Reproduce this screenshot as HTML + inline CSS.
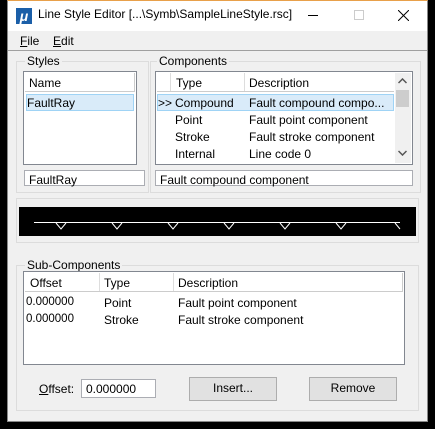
<!DOCTYPE html><html><head><style>
*{box-sizing:border-box}
body{margin:0;width:435px;height:429px;background:#000;position:relative;overflow:hidden;font-family:"Liberation Sans",sans-serif;font-size:12px;color:#000}
.a{position:absolute}
.win{left:7px;top:0;width:421px;height:422px;background:#f0f0f0;border:1px solid #888;border-top:1px solid #e8a04a}
.grp{border:1px solid #dcdcdc}
.lbl{background:#f0f0f0;padding:0 2px;font-size:12px}
.box{background:#fff;border:1px solid #828790}
.hdr{background:#fff;border-bottom:1px solid #e5e5e5}
.btn{background:#e1e1e1;border:1px solid #adadad;text-align:center;line-height:21px}
.inp{background:#fff;border:1px solid #7a7a7a;padding-left:4px;line-height:14px}
</style></head><body>
<div class="a win"></div>
<div class="a" style="left:8px;top:1px;width:419px;height:30px;background:#fff"></div>
<div class="a" style="left:16px;top:8px;width:16px;height:16px;background:#1b5fa8;color:#fff;font-style:italic;font-weight:bold;font-size:14px;line-height:16px;text-align:center">μ</div>
<div class="a" style="left:38px;top:7px;font-size:12px">Line Style Editor [...\Symb\SampleLineStyle.rsc]</div>
<div class="a" style="left:308px;top:15px;width:10px;height:1px;background:#000"></div>
<div class="a" style="left:354px;top:10px;width:10px;height:10px;border:1px solid #ccc"></div>
<svg class="a" style="left:398px;top:10px" width="11" height="11"><path d="M0 0L11 11M11 0L0 11" stroke="#000"/></svg>
<div class="a" style="left:20px;top:34px"><u>F</u>ile</div>
<div class="a" style="left:53px;top:34px"><u>E</u>dit</div>
<div class="a" style="left:8px;top:50px;width:419px;height:1px;background:#a0a0a0"></div>

<div class="a grp" style="left:16px;top:61px;width:133px;height:132px"></div>
<div class="a lbl" style="left:25px;top:54px">Styles</div>
<div class="a box" style="left:23px;top:71px;width:114px;height:94px"></div>
<div class="a hdr" style="left:25px;top:73px;width:110px;height:19px;border-right:1px solid #ccc;border-bottom:1px solid #ccc"></div>
<div class="a" style="left:29px;top:76px">Name</div>
<div class="a" style="left:26px;top:94px;width:108px;height:17px;background:#d9ebf9;border:1px solid #9fd3f5"></div>
<div class="a" style="left:27px;top:96px">FaultRay</div>
<div class="a inp" style="left:24px;top:170px;width:121px;height:16px;border-color:#abadb3"></div>
<div class="a" style="left:29px;top:173px">FaultRay</div>

<div class="a grp" style="left:150px;top:61px;width:271px;height:132px"></div>
<div class="a lbl" style="left:157px;top:54px">Components</div>
<div class="a box" style="left:155px;top:71px;width:258px;height:94px"></div>
<div class="a hdr" style="left:157px;top:73px;width:237px;height:19px;border-bottom:1px solid #ccc"></div>
<div class="a" style="left:170px;top:73px;width:1px;height:18px;background:#ddd"></div>
<div class="a" style="left:244px;top:73px;width:1px;height:18px;background:#ddd"></div>
<div class="a" style="left:176px;top:76px">Type</div>
<div class="a" style="left:249px;top:76px">Description</div>
<div class="a" style="left:395px;top:73px;width:16px;height:90px;background:#f0f0f0"></div>
<div class="a" style="left:396px;top:90px;width:13px;height:17px;background:#cdcdcd"></div>
<svg class="a" style="left:398px;top:78px" width="9" height="6"><path d="M0.5 5L4.5 1L8.5 5" stroke="#555" fill="none" stroke-width="1.5"/></svg>
<svg class="a" style="left:398px;top:150px" width="9" height="6"><path d="M0.5 1L4.5 5L8.5 1" stroke="#555" fill="none" stroke-width="1.5"/></svg>
<div class="a" style="left:157px;top:94px;width:237px;height:17px;background:#d9ebf9;border:1px solid #9fd3f5"></div>
<div class="a" style="left:158px;top:96px">&gt;&gt;</div>
<div class="a" style="left:175px;top:96px">Compound</div><div class="a" style="left:249px;top:96px">Fault compound compo...</div>
<div class="a" style="left:175px;top:113px">Point</div><div class="a" style="left:249px;top:113px">Fault point component</div>
<div class="a" style="left:175px;top:130px">Stroke</div><div class="a" style="left:249px;top:130px">Fault stroke component</div>
<div class="a" style="left:175px;top:147px">Internal</div><div class="a" style="left:249px;top:147px">Line code 0</div>
<div class="a inp" style="left:155px;top:170px;width:258px;height:16px;border-color:#abadb3"></div>
<div class="a" style="left:160px;top:173px">Fault compound component</div>

<div class="a grp" style="left:16px;top:198px;width:403px;height:45px"></div>
<div class="a" style="left:19px;top:207px;width:397px;height:29px;background:#000"></div>
<svg class="a" style="left:19px;top:207px" width="397" height="29"><path d="M15 15.5H381" stroke="#fff"/><g stroke="#fff" fill="none"><path d="M37 16l5 6l5-6M93 16l5 6l5-6M149 16l5 6l5-6M205 16l5 6l5-6M261 16l5 6l5-6M317 16l5 6l5-6M376 16l5 6"/></g></svg>

<div class="a grp" style="left:16px;top:265px;width:403px;height:146px"></div>
<div class="a lbl" style="left:25px;top:258px">Sub-Components</div>
<div class="a box" style="left:23px;top:271px;width:382px;height:94px"></div>
<div class="a hdr" style="left:25px;top:273px;width:378px;height:19px;border-bottom:1px solid #ccc;border-right:1px solid #ccc"></div>
<div class="a" style="left:99px;top:273px;width:1px;height:18px;background:#ddd"></div>
<div class="a" style="left:173px;top:273px;width:1px;height:18px;background:#ddd"></div>
<div class="a" style="left:30px;top:276px">Offset</div><div class="a" style="left:104px;top:276px">Type</div><div class="a" style="left:178px;top:276px">Description</div>
<div class="a" style="left:26px;top:296px;font-size:11.5px">0.000000</div><div class="a" style="left:104px;top:296px">Point</div><div class="a" style="left:178px;top:296px">Fault point component</div>
<div class="a" style="left:26px;top:313px;font-size:11.5px">0.000000</div><div class="a" style="left:104px;top:313px">Stroke</div><div class="a" style="left:178px;top:313px">Fault stroke component</div>
<div class="a" style="left:39px;top:382px"><u>O</u>ffset:</div>
<div class="a inp" style="left:81px;top:379px;width:75px;height:19px;border-color:#abadb3"></div>
<div class="a" style="left:86px;top:382px">0.000000</div>
<div class="a btn" style="left:189px;top:377px;width:88px;height:24px">Insert...</div>
<div class="a btn" style="left:309px;top:377px;width:88px;height:24px">Remove</div>
</body></html>
